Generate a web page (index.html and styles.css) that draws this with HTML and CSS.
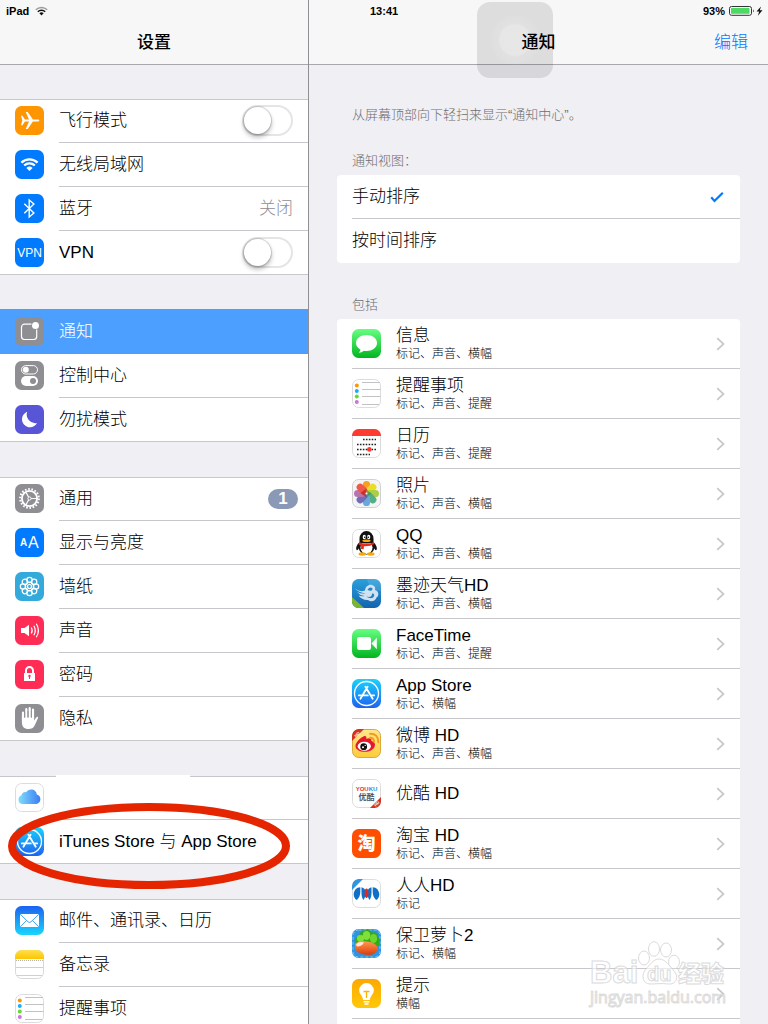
FILE: index.html
```html
<!DOCTYPE html>
<html lang="zh-CN">
<head>
<meta charset="utf-8">
<meta name="viewport" content="width=device-width, initial-scale=1">
<title>设置</title>
<link rel="stylesheet" href="styles.css">
</head>
<body>
<svg class="defs" width="0" height="0" aria-hidden="true">
  <defs>
    <linearGradient id="green" x2="0" y2="1"><stop stop-color="#67ff81"/><stop offset="1" stop-color="#01b41f"/></linearGradient>
    <linearGradient id="store" x2="0" y2="1"><stop stop-color="#19d3fd"/><stop offset="1" stop-color="#1e62f0"/></linearGradient>
    <linearGradient id="mail" x2="0" y2="1"><stop stop-color="#1d62f0"/><stop offset="1" stop-color="#19d5fd"/></linearGradient>
    <linearGradient id="cloud"><stop stop-color="#81dcfa"/><stop offset="1" stop-color="#3a7df5"/></linearGradient>
    <linearGradient id="yellow" x2="0" y2="1"><stop stop-color="#ffdf4f"/><stop offset="1" stop-color="#fec500"/></linearGradient>
    <linearGradient id="moji" x2="0" y2="1"><stop stop-color="#2aa0dc"/><stop offset="1" stop-color="#1463ae"/></linearGradient>
    <linearGradient id="weibo" x2="0" y2="1"><stop stop-color="#ffe88a"/><stop offset="1" stop-color="#fdcb3c"/></linearGradient>
    <linearGradient id="tips" x2="0" y2="1"><stop stop-color="#fda800"/><stop offset="1" stop-color="#ffc80a"/></linearGradient>
    <linearGradient id="carrot" x2="0" y2="1"><stop stop-color="#ff9a4d"/><stop offset="1" stop-color="#dc3b0c"/></linearGradient>
    <clipPath id="tile"><rect width="29" height="29" rx="6.5"/></clipPath>
    <symbol id="i-store" viewBox="0 0 29 29">
      <rect width="29" height="29" rx="6.5" fill="url(#store)"/>
      <circle cx="14.5" cy="14.5" r="12" fill="none" stroke="#fff" stroke-width="1.3"/>
      <path d="M13.4 7.800 20.700 19.800M15.600 7.800 8.400 19.800M6.800 16.400h9M19 16.400h3.200" fill="none" stroke="#fff" stroke-width="1.8" stroke-linecap="round"/>
    </symbol>
    <symbol id="i-reminders" viewBox="0 0 29 29">
      <rect x=".5" y=".5" width="28" height="28" rx="6.2" fill="#fff" stroke="#dcdcdc"/>
      <path d="M10 3.5h18M10 10.5h18.500M10 17.500h18.500M10 25.500h17" stroke="#c2c2c4"/>
      <circle cx="4.800" cy="6.500" r="2" fill="#ff9500"/><circle cx="4.800" cy="12" r="2" fill="#1badf8"/><circle cx="4.800" cy="17.500" r="2" fill="#63da38"/><circle cx="4.800" cy="23" r="2" fill="#cc73e1"/>
    </symbol>
    <symbol id="i-chevron" viewBox="0 0 9 14"><path d="M1.200 1.200 7.500 7l-6.300 5.800" fill="none" stroke="#c7c7cc" stroke-width="1.700"/></symbol>
  </defs>
</svg>

<div class="app">
  <aside class="sidebar">
    <header class="navbar">
      <div class="status"><span>iPad</span>
        <svg width="13" height="10" viewBox="0 0 13 10" aria-hidden="true"><path d="M.8 3.800a8.200 8.200 0 0 1 11.400 0" fill="none" stroke="#9a9a9a" stroke-width="1.400"/><path d="M2.800 5.700a5.300 5.300 0 0 1 7.400 0" fill="none" stroke="#111" stroke-width="1.500"/><path d="M4.400 7.200a3 3 0 0 1 4.200 0L6.500 9.600z" fill="#111"/></svg>
      </div>
      <h1 class="title">设置</h1>
    </header>
    <nav class="groups" aria-label="设置">
      <ul class="group">
        <li class="row">
          <svg class="icon" viewBox="0 0 29 29"><rect width="29" height="29" rx="6.500" fill="#ff9500"/><path d="M6 9.800h1.400l2.600 3.700h4L10.700 6h2l5.200 7.500h4.600c2.500 0 2.500 2 0 2h-4.600L12.700 23h-2l3.300-7.500h-4l-2.600 3.700H6l1.300-4.700z" fill="#fff"/></svg>
          <div class="cell"><label class="name" for="airplane">飞行模式</label><input class="switch" type="checkbox" role="switch" id="airplane"></div>
        </li>
        <li><a class="row" href="#wifi">
          <svg class="icon" viewBox="0 0 29 29"><rect width="29" height="29" rx="6.500" fill="#007aff"/><path d="M6.400 12.600a11.600 11.600 0 0 1 16.200 0M9.200 15.500a7.600 7.600 0 0 1 10.600 0" fill="none" stroke="#fff" stroke-width="2.300"/><path d="M11.400 17.900a4.600 4.600 0 0 1 6.200 0l-3.100 3.200z" fill="#fff"/></svg>
          <span class="cell"><span class="name">无线局域网</span></span></a></li>
        <li><a class="row" href="#bluetooth">
          <svg class="icon" viewBox="0 0 29 29"><rect width="29" height="29" rx="6.500" fill="#007aff"/><path d="m9.300 9.800 9.600 9.200-4.700 4V6l4.700 4-9.600 9.200" fill="none" stroke="#fff" stroke-width="1.400"/></svg>
          <span class="cell"><span class="name">蓝牙</span><span class="value">关闭</span></span></a></li>
        <li class="row">
          <svg class="icon" viewBox="0 0 29 29"><rect width="29" height="29" rx="6.500" fill="#007aff"/><text x="14.500" y="19" text-anchor="middle" font-size="12" fill="#fff">VPN</text></svg>
          <div class="cell"><label class="name" for="vpn">VPN</label><input class="switch" type="checkbox" role="switch" id="vpn"></div>
        </li>
      </ul>

      <ul class="group">
        <li><a class="row selected" href="#notifications" aria-current="page">
          <svg class="icon" viewBox="0 0 29 29"><rect width="29" height="29" rx="6.500" fill="#8e8e93"/><path d="M16.500 7.200H9.500a3 3 0 0 0-3 3v9.300a3 3 0 0 0 3 3h9.200a3 3 0 0 0 3-3v-7" fill="none" stroke="#fff" stroke-width="1.200"/><circle cx="20.500" cy="8.500" r="3.500" fill="#fff"/></svg>
          <span class="cell"><span class="name">通知</span></span></a></li>
        <li><a class="row" href="#control">
          <svg class="icon" viewBox="0 0 29 29"><rect width="29" height="29" rx="6.500" fill="#8e8e93"/><rect x="6.500" y="4.600" width="16" height="8.400" rx="4.200" fill="none" stroke="#fff"/><circle cx="10.800" cy="8.800" r="3" fill="#fff"/><rect x="6" y="15" width="17" height="10" rx="5" fill="#fff"/><circle cx="18" cy="20" r="3" fill="#8e8e93"/></svg>
          <span class="cell"><span class="name">控制中心</span></span></a></li>
        <li><a class="row" href="#dnd">
          <svg class="icon" viewBox="0 0 29 29"><rect width="29" height="29" rx="6.500" fill="#5856d6"/><path d="M12.200 6.800a8 8 0 1 0 9.900 11.200 8.600 8.600 0 0 1-9.900-11.200z" fill="#fff"/></svg>
          <span class="cell"><span class="name">勿扰模式</span></span></a></li>
      </ul>

      <ul class="group">
        <li><a class="row" href="#general">
          <svg class="icon" viewBox="0 0 29 29"><rect width="29" height="29" rx="6.500" fill="#8e8e93"/><circle cx="14.500" cy="14.500" r="9.400" fill="none" stroke="#fff" stroke-width="2" stroke-dasharray="1.640 1.640"/><circle cx="14.500" cy="14.500" r="7.600" fill="none" stroke="#fff" stroke-width="1.900"/><circle cx="14.500" cy="14.500" r="1.600" fill="none" stroke="#fff"/><path d="M16 14.500h6M13.700 13.200 10.800 8M13.700 15.800 10.800 21" stroke="#fff" stroke-width="1.200"/></svg>
          <span class="cell"><span class="name">通用</span><span class="count">1</span></span></a></li>
        <li><a class="row" href="#display">
          <svg class="icon" viewBox="0 0 29 29"><rect width="29" height="29" rx="6.500" fill="#007aff"/><text x="5" y="18" font-size="10" font-weight="bold" fill="#fff">A</text><text x="13" y="20" font-size="16" fill="#fff">A</text></svg>
          <span class="cell"><span class="name">显示与亮度</span></span></a></li>
        <li><a class="row" href="#wallpaper">
          <svg class="icon" viewBox="0 0 29 29"><rect width="29" height="29" rx="6.500" fill="#34aadc"/><g fill="none" stroke="#fff" stroke-width="1.200"><circle cx="14.500" cy="14.500" r="2"/><circle cx="14.500" cy="8" r="2.700"/><circle cx="14.500" cy="21" r="2.700"/><circle cx="8" cy="14.500" r="2.700"/><circle cx="21" cy="14.500" r="2.700"/><circle cx="9.900" cy="9.900" r="2.700"/><circle cx="19.100" cy="9.900" r="2.700"/><circle cx="9.900" cy="19.100" r="2.700"/><circle cx="19.100" cy="19.100" r="2.700"/><circle cx="14.500" cy="14.500" r="4.300"/></g></svg>
          <span class="cell"><span class="name">墙纸</span></span></a></li>
        <li><a class="row" href="#sounds">
          <svg class="icon" viewBox="0 0 29 29"><rect width="29" height="29" rx="6.500" fill="#ff2d55"/><path d="M6 12h3.500L14 8.700v11.600L9.500 17H6z" fill="#fff"/><path d="M16.300 11.500q1.800 3 0 6M18.800 9.700q3 4.800 0 9.600M21.300 7.700q4.200 6.800 0 13.600" fill="none" stroke="#fff" stroke-width="1.200"/></svg>
          <span class="cell"><span class="name">声音</span></span></a></li>
        <li><a class="row" href="#passcode">
          <svg class="icon" viewBox="0 0 29 29"><rect width="29" height="29" rx="6.500" fill="#ff2d55"/><path d="M11 14v-3.500a3.500 3.500 0 0 1 7 0V14" fill="none" stroke="#fff" stroke-width="2"/><rect x="9" y="13" width="11" height="8" fill="#fff"/><path d="M14.500 16v3" stroke="#ff2d55" stroke-width="1"/><circle cx="14.500" cy="16" r="1.200" fill="#ff2d55"/></svg>
          <span class="cell"><span class="name">密码</span></span></a></li>
        <li><a class="row" href="#privacy">
          <svg class="icon" viewBox="0 0 29 29"><rect width="29" height="29" rx="6.500" fill="#8e8e93"/><path d="M8 16V8.500M11.300 14V5M14.700 14V4M18 14V5.500" stroke="#fff" stroke-width="2.200" stroke-linecap="round"/><path d="M6.900 13h12.200v3.500l2.300-3.200c.8-1 2.200-.6 1.500.9l-3 6.800c-1.400 3-3.500 4-6.400 4-4.500 0-6.600-2.500-6.600-7z" fill="#fff"/><path d="M9.700 8v6M13 7v7M16.400 7v7" stroke="#8e8e93" stroke-width=".8"/></svg>
          <span class="cell"><span class="name">隐私</span></span></a></li>
      </ul>

      <ul class="group">
        <li><a class="row" href="#icloud" aria-label="iCloud">
          <svg class="icon" viewBox="0 0 29 29"><rect x=".5" y=".5" width="28" height="28" rx="6.200" fill="#fff" stroke="#dcdcdc"/><path d="M7.500 21A4.400 4.400 0 0 1 6.300 12.500 4 4 0 0 1 11 9.200a5.900 5.900 0 0 1 10.800 2.300A4.900 4.900 0 0 1 21.500 21z" fill="url(#cloud)"/></svg>
          <span class="cell"></span></a></li>
        <li><a class="row" href="#store">
          <svg class="icon"><use href="#i-store"/></svg>
          <span class="cell"><span class="name">iTunes Store 与 App Store</span></span></a></li>
        <li class="eraser" aria-hidden="true"></li>
        <li class="ring" aria-hidden="true"><svg width="282" height="86" viewBox="0 0 282 86"><ellipse cx="141" cy="43" rx="137" ry="39" fill="none" stroke="#e42500" stroke-width="8"/></svg></li>
      </ul>

      <ul class="group">
        <li><a class="row" href="#mail">
          <svg class="icon" viewBox="0 0 29 29"><rect width="29" height="29" rx="6.500" fill="url(#mail)"/><rect x="5" y="8" width="19" height="13" rx="1" fill="#fff"/><path d="m5.300 8.300 7.700 7.500q1.500 1.400 3 0l7.700-7.500M5.300 20.800l6.200-6.300M23.700 20.800l-6.200-6.300" fill="none" stroke="#2796f5" stroke-width=".9"/></svg>
          <span class="cell"><span class="name">邮件、通讯录、日历</span></span></a></li>
        <li><a class="row" href="#notes">
          <svg class="icon" viewBox="0 0 29 29"><rect x=".5" y=".5" width="28" height="28" rx="6.200" fill="#fff" stroke="#d8d8d8"/><path d="M0 9V6.500A6.500 6.500 0 0 1 6.500 0h16A6.500 6.500 0 0 1 29 6.500V9z" fill="url(#yellow)"/><path d="M1 10.500h27" stroke="#b5b5b5" stroke-dasharray="1 1"/><path d="M1 17.500h27M2 25.500h25" stroke="#d0d0d0"/></svg>
          <span class="cell"><span class="name">备忘录</span></span></a></li>
        <li><a class="row" href="#reminders">
          <svg class="icon"><use href="#i-reminders"/></svg>
          <span class="cell"><span class="name">提醒事项</span></span></a></li>
      </ul>
    </nav>
  </aside>

  <main class="detail">
    <header class="navbar">
      <div class="status end">
        <time class="clock">13:41</time>
        <span>93%</span>
        <svg width="34" height="10" viewBox="0 0 34 10" aria-hidden="true"><rect x=".5" y=".5" width="22" height="8.800" rx="2" fill="none" stroke="#333"/><rect x="2" y="2" width="18.500" height="5.800" rx=".6" fill="#4cd964"/><path d="M24 3.200q1.600 1.700 0 3.400z" fill="#111"/><path d="m32 .5-4.500 5h2.700L28.800 9.700 33.500 4.300h-2.700z" fill="#111"/></svg>
      </div>
      <h2 class="title">通知</h2>
      <button class="edit" type="button">编辑</button>
    </header>
    <button class="assist" type="button" aria-label="AssistiveTouch"></button>

    <div class="content">
      <p class="hint intro">从屏幕顶部向下轻扫来显示“通知中心”。</p>
      <h3 class="hint">通知视图：</h3>
      <div class="card options" role="radiogroup" aria-label="通知视图">
        <label class="option"><input type="radio" name="sort" checked>手动排序
          <svg class="check" width="14" height="12" viewBox="0 0 14 12" aria-hidden="true"><path d="m1.200 6.300 3.300 3.700 8.300-8.300" fill="none" stroke="#007aff" stroke-width="2.200"/></svg></label>
        <label class="option"><input type="radio" name="sort">按时间排序</label>
      </div>
      <h3 class="hint include">包括</h3>
      <ul class="card apps">
        <li><a class="app-row" href="#messages">
          <svg class="icon" viewBox="0 0 29 29"><rect width="29" height="29" rx="6.500" fill="url(#green)"/><path d="M14.500 6C8.700 6 4 9.500 4 14c0 2.700 1.700 5.100 4.400 6.500-.1 1.400-.8 2.400-1.600 3.300 2 0 3.800-.8 5-2 .9.200 1.800.2 2.700.2 5.800 0 10.500-3.500 10.500-8s-4.700-8-10.500-8z" fill="#fff"/></svg>
          <span class="texts"><span class="name">信息</span><small>标记、声音、横幅</small></span><svg class="chev"><use href="#i-chevron"/></svg></a></li>
        <li><a class="app-row" href="#rem">
          <svg class="icon"><use href="#i-reminders"/></svg>
          <span class="texts"><span class="name">提醒事项</span><small>标记、声音、提醒</small></span><svg class="chev"><use href="#i-chevron"/></svg></a></li>
        <li><a class="app-row" href="#calendar">
          <svg class="icon" viewBox="0 0 29 29"><rect x=".5" y=".5" width="28" height="28" rx="6.200" fill="#fff" stroke="#dcdcdc"/><path d="M0 7v-.5A6.500 6.500 0 0 1 6.500 0h16A6.500 6.500 0 0 1 29 6.500V7z" fill="#ff3b30"/><path d="M11 10.500h13M5 15.500h19M5 20.500h19M5 25.500h13" stroke="#222" stroke-width="1.600" stroke-dasharray="1.600 1.300"/><circle cx="17.300" cy="20.400" r="2.300" fill="#ff3b30"/></svg>
          <span class="texts"><span class="name">日历</span><small>标记、声音、提醒</small></span><svg class="chev"><use href="#i-chevron"/></svg></a></li>
        <li><a class="app-row" href="#photos">
          <svg class="icon" viewBox="0 0 29 29"><rect x=".5" y=".5" width="28" height="28" rx="6.200" fill="#f4f4f4" stroke="#d0d0d0"/>
            <g opacity=".95"><rect x="10.900" y="2" width="7.200" height="12" rx="3.600" fill="#f99a1c"/><rect x="10.900" y="2" width="7.200" height="12" rx="3.600" fill="#e9dc1a" transform="rotate(45 14.500 14.500)"/><rect x="10.900" y="2" width="7.200" height="12" rx="3.600" fill="#a8cc3c" transform="rotate(90 14.500 14.500)"/><rect x="10.900" y="2" width="7.200" height="12" rx="3.600" fill="#4cab80" transform="rotate(135 14.500 14.500)"/><rect x="10.900" y="2" width="7.200" height="12" rx="3.600" fill="#5fa6dc" transform="rotate(180 14.500 14.500)"/><rect x="10.900" y="2" width="7.200" height="12" rx="3.600" fill="#6a66b4" transform="rotate(225 14.500 14.500)"/><rect x="10.900" y="2" width="7.200" height="12" rx="3.600" fill="#b56fa9" transform="rotate(270 14.500 14.500)"/><rect x="10.900" y="2" width="7.200" height="12" rx="3.600" fill="#ee5040" transform="rotate(315 14.500 14.500)"/></g><path d="M14.500 9.500 8.500 14l6 4.500-1-4z" fill="#b11" opacity=".6"/><path d="m14.500 10.500 5 4-5 4.500z" fill="#383" opacity=".5"/><circle cx="14.500" cy="14.500" r="1" fill="#fff"/></svg>
          <span class="texts"><span class="name">照片</span><small>标记、声音、横幅</small></span><svg class="chev"><use href="#i-chevron"/></svg></a></li>
        <li><a class="app-row" href="#qq">
          <svg class="icon" viewBox="0 0 29 29"><rect x=".5" y=".5" width="28" height="28" rx="6.200" fill="#fff" stroke="#dcdcdc"/><path d="M7.500 13C4.500 16 3.500 19 4.500 21c1 .6 2-1 3-2.500zM21.500 13c3 3 4 6 3 8-1 .6-2-1-3-2.500z" fill="#111"/><ellipse cx="14.500" cy="17.500" rx="8" ry="8" fill="#111"/><ellipse cx="14.500" cy="18.500" rx="6" ry="6.500" fill="#fff"/><ellipse cx="10.300" cy="25" rx="3.800" ry="1.700" fill="#f8a800"/><ellipse cx="18.700" cy="25" rx="3.800" ry="1.700" fill="#f8a800"/><path d="M7.500 13V9.500a7 7.500 0 0 1 14 0V13q-7 3-14 0z" fill="#111"/><ellipse cx="12.300" cy="8" rx="1.600" ry="2.300" fill="#fff"/><ellipse cx="16.700" cy="8" rx="1.600" ry="2.300" fill="#fff"/><circle cx="12.800" cy="8.300" r=".8"/><circle cx="16.300" cy="8.300" r=".8"/><ellipse cx="14.500" cy="11.800" rx="4.200" ry="1.200" fill="#f8a800"/><path d="M7.200 13q7.300 4 14.600 0l.8 2q-5 2.700-10.600 2.300l-.4 3-2.600-.4.200-3.200q-1.500-.5-2.700-1.500z" fill="#e9281d"/></svg>
          <span class="texts"><span class="name">QQ</span><small>标记、声音、横幅</small></span><svg class="chev"><use href="#i-chevron"/></svg></a></li>
        <li><a class="app-row" href="#moji">
          <svg class="icon" viewBox="0 0 29 29"><g clip-path="url(#tile)"><rect width="29" height="29" fill="url(#moji)"/><path d="M15 0h14v12Q18 12 15 0z" fill="#fff" opacity=".12"/><path d="M0 18l12 11H0z" fill="#7db62c"/></g><path d="M3 9.500q5 4 10 2c.5-4 3.500-6.300 7-5.500 2.700.6 3.700 2.700 3 5 3.800 1 4.500 5.500 1.500 7.500-1 3.700-5.500 4.800-8.500 2.500-4 .3-7-1.500-9.500-4.500q3.500 1.300 6 .5-5-.8-7.500-4 4.500 2.300 8.500 1.300Q6.500 13.500 3 9.500z" fill="#cfe2f1"/><path d="M14.500 17.500c3.500 1.200 6-.5 5.500-3 2-.5 3 2 1.500 3.500-1.500 1.700-4.500 1.600-7-.5zM15.500 11c1-2.500 3.500-3.300 4.800-1.800.8 1.500-.8 2.600-2.100 2.600z" fill="#2380c6"/></svg>
          <span class="texts"><span class="name">墨迹天气HD</span><small>标记、声音、横幅</small></span><svg class="chev"><use href="#i-chevron"/></svg></a></li>
        <li><a class="app-row" href="#facetime">
          <svg class="icon" viewBox="0 0 29 29"><rect width="29" height="29" rx="6.500" fill="url(#green)"/><rect x="5" y="8" width="14" height="13" rx="2.200" fill="#fff"/><path d="m19.500 14.500 5.300-5.800v11.600z" fill="#fff"/></svg>
          <span class="texts"><span class="name">FaceTime</span><small>标记、声音、提醒</small></span><svg class="chev"><use href="#i-chevron"/></svg></a></li>
        <li><a class="app-row" href="#appstore">
          <svg class="icon"><use href="#i-store"/></svg>
          <span class="texts"><span class="name">App Store</span><small>标记、横幅</small></span><svg class="chev"><use href="#i-chevron"/></svg></a></li>
        <li><a class="app-row" href="#weibo">
          <svg class="icon" viewBox="0 0 29 29"><rect x=".5" y=".5" width="28" height="28" rx="6.200" fill="url(#weibo)" stroke="#d9a93a"/><path d="M0 12V6.500A6.500 6.500 0 0 1 6.500 0H12z" fill="#d3321f" clip-path="url(#tile)"/><text x="5" y="7" text-anchor="middle" font-size="4" font-weight="bold" fill="#fff" transform="rotate(-45 5 5.500)">HD</text><path d="M11.500 7.500c2-1 3.300 0 2.800 2.300 3-1.300 5.800-.6 5 2.200 3 .8 4.200 2.700 3.500 5-1 3.500-5 5.800-10 5.800S3.500 20.500 3.500 17c0-3 4-7.700 8-9.500z" fill="#e6162d"/><ellipse cx="12.300" cy="17.300" rx="6.600" ry="4.500" fill="#fff"/><circle cx="11.700" cy="17.700" r="3.400" fill="#111"/><circle cx="11" cy="18.300" r="1" fill="#fff"/><circle cx="13.200" cy="16.400" r=".6" fill="#fff"/><path d="M18 8.800q4-.4 4 4M18 4.800q8.300-.3 8.300 8.500" fill="none" stroke="#f59a23" stroke-width="1.900" stroke-linecap="round"/></svg>
          <span class="texts"><span class="name">微博 HD</span><small>标记、声音、横幅</small></span><svg class="chev"><use href="#i-chevron"/></svg></a></li>
        <li><a class="app-row" href="#youku">
          <svg class="icon" viewBox="0 0 29 29"><rect x=".5" y=".5" width="28" height="28" rx="6.200" fill="#fff" stroke="#dcdcdc"/><text x="14.500" y="12" text-anchor="middle" font-size="6" font-weight="bold" fill="#e5321c">YOU<tspan fill="#1a8fe0">KU</tspan></text><text x="14.500" y="20.500" text-anchor="middle" font-size="8" font-weight="bold" fill="#44576a">优酷</text><path d="M18 29 29 18v11z" fill="#d3321f" clip-path="url(#tile)"/><text x="25" y="26" text-anchor="middle" font-size="4" font-weight="bold" fill="#fff" transform="rotate(-45 25 25)">HD</text></svg>
          <span class="texts"><span class="name">优酷 HD</span></span><svg class="chev"><use href="#i-chevron"/></svg></a></li>
        <li><a class="app-row" href="#taobao">
          <svg class="icon" viewBox="0 0 29 29"><rect width="29" height="29" rx="6.500" fill="#ff4e00"/><text x="14.500" y="21" text-anchor="middle" font-size="18" font-weight="900" fill="#fff">淘</text></svg>
          <span class="texts"><span class="name">淘宝 HD</span><small>标记、声音、横幅</small></span><svg class="chev"><use href="#i-chevron"/></svg></a></li>
        <li><a class="app-row" href="#renren">
          <svg class="icon" viewBox="0 0 29 29"><rect x=".5" y=".5" width="28" height="28" rx="6.200" fill="#fff" stroke="#dcdcdc"/><path d="M0 11V6.500A6.500 6.500 0 0 1 6.500 0H11z" fill="#2f95dc" clip-path="url(#tile)"/><path d="M8.300 8.300C4.500 8.300 1.700 11.500 1.700 15.500c0 2.400 1.300 4.600 3.200 5.600 2.200-2 3.400-5 3.400-8zM9.500 8.300c2.600.5 4.100 2.500 4.300 5-.2 3-.8 5.500-2.300 7.800-1.500-2-2-4.500-2-7.500zM20.700 8.300c3.800 0 6.600 3.200 6.600 7.200 0 2.400-1.300 4.600-3.200 5.600-2.200-2-3.400-5-3.400-8zM19.500 8.300c-2.600.5-4.100 2.500-4.300 5 .2 3 .8 5.500 2.300 7.800 1.500-2 2-4.500 2-7.500z" fill="#0f70ca"/><ellipse cx="14.500" cy="14.300" rx="1.900" ry="4.800" fill="#e5281d"/></svg>
          <span class="texts"><span class="name">人人HD</span><small>标记</small></span><svg class="chev"><use href="#i-chevron"/></svg></a></li>
        <li><a class="app-row" href="#carrot2">
          <svg class="icon" viewBox="0 0 29 29"><rect width="29" height="29" rx="6.500" fill="#2f94e0"/><rect x="1" y="1" width="27" height="27" rx="5.500" fill="none" stroke="#7cc9f6" stroke-dasharray="3 2"/><path d="M3 13q-1-5 4-5 0-7 6-6.500 4-2.500 7 2 5-1 6 4 3 4 1 9l-6 2H8z" fill="#35a81c"/><ellipse cx="8.500" cy="9.500" rx="3.600" ry="3.400" fill="#7fe03a"/><ellipse cx="14.500" cy="6.500" rx="3.800" ry="4.600" fill="#7fe03a"/><ellipse cx="21.500" cy="9.500" rx="3.600" ry="4.600" fill="#6ed52e"/><path d="M3 15q4-4 12-2.500 9 1 11 6.500-2 6.500-9 7Q5 26 3 19z" fill="url(#carrot)"/><path d="M4 15.500q3-3.500 8-2-2 4-7 4z" fill="#fff" opacity=".8"/></svg>
          <span class="texts"><span class="name">保卫萝卜2</span><small>标记、横幅</small></span><svg class="chev"><use href="#i-chevron"/></svg></a></li>
        <li><a class="app-row" href="#tips">
          <svg class="icon" viewBox="0 0 29 29"><rect width="29" height="29" rx="6.500" fill="url(#tips)"/><path d="M14.500 4a7.300 7.300 0 0 0-7.300 7.300c0 4 3.700 5.700 3.900 9.700h6.800c.2-4 3.900-5.700 3.900-9.700A7.300 7.300 0 0 0 14.500 4z" fill="#fff"/><path d="M11.500 22.700h6M12.500 25h4" stroke="#fff" stroke-width="1.400"/><path d="M11.500 12.500h6M14.500 12.500V19" stroke="#fdb400" stroke-width="1.300"/></svg>
          <span class="texts"><span class="name">提示</span><small>横幅</small></span><svg class="chev"><use href="#i-chevron"/></svg></a></li>
      </ul>
    </div>

    <div class="watermark">
      <svg width="144" height="72" viewBox="0 0 144 72" role="img" aria-label="Baidu 经验">
        <g fill="#fff" fill-opacity=".7" stroke="#d6d6d6" stroke-width="1">
          <ellipse cx="58" cy="19" rx="5.500" ry="7"/><ellipse cx="68" cy="10" rx="5.500" ry="7.300"/><ellipse cx="80" cy="11" rx="5.500" ry="7"/><ellipse cx="88" cy="23" rx="5.500" ry="6.800"/>
          <path d="M73 20c-6 0-9 6-13 10-5 5-4 15 4 15 7 0 11-1 18 0 9 1 11-8 6-13-4-4-8-12-15-12z"/>
          <text x="4" y="44" font-size="31" font-weight="bold">Bai</text>
          <text x="61" y="42" font-size="20" font-weight="bold">du</text>
          <text x="92" y="43" font-size="23" font-weight="900">经验</text>
          <text x="4" y="64" font-size="16" class="url">jingyan.baidu.com</text>
        </g>
      </svg>
    </div>
  </main>
</div>
</body>
</html>
```
FILE: styles.css
```css
* { box-sizing: border-box; }

body {
  margin: 0;
  background: #efeff4;
  color: #000;
  font-family: "Liberation Sans", "Noto Sans CJK SC", sans-serif;
  font-size: 17px;
  font-weight: 300;
  line-height: 20px;
}

ul, h1, h2, h3, p { margin: 0; padding: 0; }
ul { list-style: none; }
a { color: inherit; text-decoration: none; }
button { font: inherit; border: 0; padding: 0; cursor: pointer; }
.defs { position: absolute; }

.app {
  display: grid;
  grid-template-columns: 309px 1fr;
  height: 100vh;
  overflow: hidden;
}

.sidebar {
  border-right: 1px solid #8e8e93;
}

.detail {
  position: relative;
  min-width: 0;
}

/* Navigation bars */
.navbar {
  display: grid;
  grid-template-columns: 1fr auto 1fr;
  grid-template-rows: 22px 42px;
  align-items: center;
  background: #f7f7f7;
  border-bottom: 1px solid #a7a7ac;
}

.status {
  grid-column: 1 / -1;
  display: flex;
  align-items: center;
  gap: 6px;
  padding: 0 6px;
  font-size: 11px;
  font-weight: bold;
}

.status.end { gap: 4px; padding-right: 5px; }
.clock { margin-left: 55px; margin-right: auto; }

.title {
  grid-column: 2;
  font-size: 17px;
  font-weight: 500;
  position: relative;
  z-index: 2;
}

.edit {
  justify-self: end;
  margin-right: 20px;
  background: none;
  color: #007aff;
}

.assist {
  position: absolute;
  top: 2px;
  left: 168px;
  width: 76px;
  height: 76px;
  border-radius: 13px;
  background: radial-gradient(circle at 38px 38px, rgba(240, 240, 240, .5) 15px, rgba(235, 235, 235, .2) 17px, rgba(235, 235, 235, .1) 24px, transparent 25px), rgba(0, 0, 0, .1);
}

/* Sidebar groups */
.groups {
  display: flex;
  flex-direction: column;
  gap: 35px;
  padding-top: 34px;
}

.group {
  position: relative;
  background: #fff;
  box-shadow: inset 0 1px #c8c7cc, inset 0 -1px #c8c7cc;
}

.row {
  display: flex;
  gap: 15px;
  height: 44px;
  padding-left: 15px;
}

.icon {
  flex: none;
  width: 29px;
  height: 29px;
}

.row .icon { margin-top: 7px; }

.icon text { font-family: "Liberation Sans", "Noto Sans CJK SC", sans-serif; }

.cell {
  flex: 1;
  display: flex;
  align-items: center;
  justify-content: space-between;
  padding-right: 15px;
  border-bottom: 1px solid #c8c7cc;
}

.row.selected { background: #4c9fff; color: #fff; box-shadow: 0 -1px #4c9fff; }
.row.selected .cell { border-color: transparent; }

.value { color: #8e8e93; }

.count {
  width: 30px;
  margin-right: -5px;
  border-radius: 10px;
  background: #8a99b5;
  color: #fff;
  font-weight: bold;
  text-align: center;
}

.switch {
  appearance: none;
  width: 51px;
  height: 31px;
  margin: 0;
  border: 2px solid #e5e5e5;
  border-radius: 16px;
  background: #fff;
}

.switch::before {
  content: "";
  display: block;
  width: 27px;
  height: 27px;
  border-radius: 50%;
  background: #fff;
  box-shadow: 0 0 1px 1px rgba(0, 0, 0, .15), 0 3px 5px rgba(0, 0, 0, .3);
}

.switch:checked { background: #4cd964; }
.switch:checked::before { margin-left: 20px; }

.eraser {
  position: absolute;
  top: -1px;
  left: 56px;
  width: 134px;
  height: 3px;
  background: #fff;
}

.ring {
  position: absolute;
  top: 27px;
  left: 8px;
  z-index: 1;
  pointer-events: none;
}

/* Detail pane */
.content { padding: 40px 28px 0; }

.hint {
  padding-left: 15px;
  color: #6d6d72;
  font-size: 13px;
  font-weight: 300;
}

.intro { margin-bottom: 26px; }
.hint + .card { margin-top: 4px; }
.include { margin-top: 32px; }

.card {
  background: #fff;
  border-radius: 4px;
}

.option {
  display: flex;
  align-items: center;
  justify-content: space-between;
  height: 44px;
  margin-left: 15px;
  padding-right: 16px;
}

.option + .option { box-shadow: 0 -1px #c8c7cc; }
.option input { position: absolute; opacity: 0; }

.app-row {
  display: flex;
  align-items: center;
  gap: 15px;
  height: 50px;
  margin-left: 15px;
  padding-right: 15px;
  border-bottom: 1px solid #c8c7cc;
}

.texts {
  flex: 1;
  display: flex;
  flex-direction: column;
  padding-top: 1px;
}

.texts small {
  font-size: 12px;
  line-height: 16px;
}

.chev { width: 9px; height: 14px; }
.apps { padding-bottom: 16px; }

.watermark {
  position: absolute;
  top: 939px;
  right: 38px;
  pointer-events: none;
  opacity: .85;
}

.watermark svg { display: block; }
.watermark .url { font-family: "Open Sans", sans-serif; font-weight: 400; }
```
